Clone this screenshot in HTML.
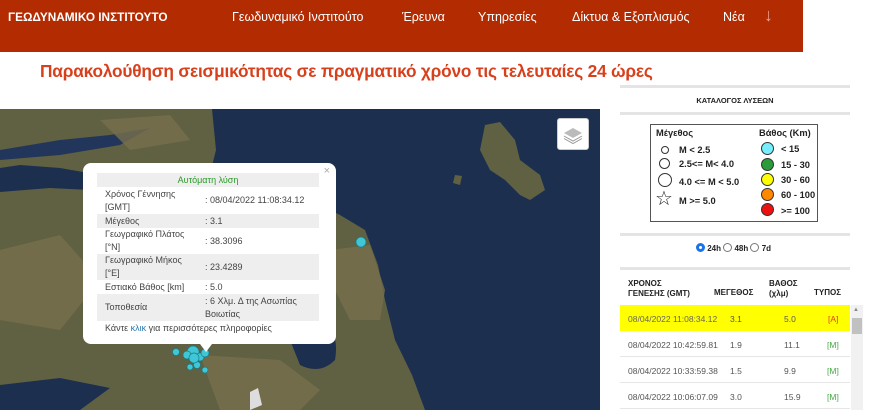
<!DOCTYPE html>
<html><head><meta charset="utf-8"><style>
*{margin:0;padding:0;box-sizing:border-box}
body{width:880px;height:410px;overflow:hidden;background:#fff;font-family:"Liberation Sans",sans-serif;position:relative}
.hdr{position:absolute;left:0;top:0;width:803px;height:52px;background:#b32b00}
.hdr span{position:absolute;top:10px;color:#fff;font-size:12.5px}
.title{position:absolute;left:40px;top:61px;color:#d8401c;font-size:17.3px;font-weight:bold;letter-spacing:-.2px}
.map{position:absolute;left:0;top:109px;width:600px;height:301px;background:#1d2f4e;overflow:hidden}
.pop{position:absolute;left:83px;top:163px;width:253px;height:181px;background:#fff;border-radius:8px;font-size:9px;color:#444}
.pop table{position:absolute;left:14px;top:10px;width:222px;border-collapse:collapse}
.pop td{padding:0 0 0 8px;line-height:13px;vertical-align:middle}
.g{background:#eee}
.rp{position:absolute;left:620px;width:230px;height:3px;background:#e4e4e4}
.leg{position:absolute;left:650px;top:124px;width:168px;height:98px;border:1.5px solid #555;font-size:9.3px;font-weight:bold;color:#222}
.leg div{position:absolute}
.c{border:1px solid #333;border-radius:50%}
.th{position:absolute;font-size:8px;font-weight:bold;color:#222;line-height:10px}
.row{position:absolute;left:620px;width:230px;height:26px;font-size:8.5px;color:#555;border-bottom:1px solid #e6e6e6}
.row span{position:absolute;top:9px}
</style></head><body>
<div class="hdr">
<span style="left:8px;font-weight:bold;font-size:11.8px">ΓΕΩΔΥΝΑΜΙΚΟ ΙΝΣΤΙΤΟΥΤΟ</span>
<span style="left:232px">Γεωδυναμικό Ινστιτούτο</span>
<span style="left:402px">Έρευνα</span>
<span style="left:478px">Υπηρεσίες</span>
<span style="left:572px">Δίκτυα &amp; Εξοπλισμός</span>
<span style="left:723px">Νέα</span>
<span style="left:764px;top:5px;font-size:18px;color:#f0a090">↓</span>
</div>
<div class="title">Παρακολούθηση σεισμικότητας σε πραγματικό χρόνο τις τελευταίες 24 ώρες</div>
<div class="map">
<svg width="600" height="301" viewBox="0 109 600 301">
<g fill="#5f6142">
<path d="M0 109 L212 109 L216 150 L212 166 L180 168 L140 172 L100 175 L60 168 L20 165 L0 168Z"/>
<path d="M0 192 L50 188 L90 190 L140 182 L215 172 L240 165 L280 175 L310 200 L340 215 L365 230 L378 265 L385 300 L395 340 L412 375 L425 410 L0 410Z"/>
<path d="M485 125 L500 122 L515 140 L520 160 L540 175 L545 190 L530 200 L520 195 L505 180 L490 170 L480 150Z"/>
<path d="M455 175 L462 176 L460 185 L453 183Z"/>
</g>
<path d="M0 150 L60 140 L110 135 L150 128 L120 145 L60 155 L0 160Z" fill="#22355a"/>
<g fill="#786f4c" opacity=".8">
<path d="M0 250 L60 235 L100 280 L60 330 L0 320Z"/>
<path d="M200 355 L280 360 L320 390 L300 410 L220 410Z"/>
<path d="M330 250 L370 245 L385 290 L380 320 L350 320 L335 290Z"/>
<path d="M100 120 L170 115 L190 140 L130 150Z"/>
</g>
<path d="M290 340 Q300 320 320 322 Q340 330 335 360 Q320 375 300 365Z" fill="#1d2f4e"/>
<path d="M0 385 L60 378 L110 388 L80 410 L0 410Z" fill="#1d2f4e"/>
<path d="M250 392 L258 388 L262 405 L250 410Z" fill="#ddd"/>
<g fill="#3fc7d6" stroke="#1a7a8a" stroke-width=".7">
<circle cx="361" cy="242" r="5"/>
<circle cx="176" cy="352" r="3.5"/><circle cx="193" cy="352" r="6"/><circle cx="200" cy="357" r="4"/><circle cx="187" cy="355" r="4"/><circle cx="205" cy="353" r="4"/><circle cx="197" cy="365" r="3.5"/><circle cx="205" cy="370" r="3"/><circle cx="190" cy="367" r="3"/><circle cx="194" cy="358" r="5"/>
</g>
<path d="M200 344 L212 344 L206 352Z" fill="#fff"/>
</svg>
<div style="position:absolute;left:557px;top:9px;width:32px;height:32px;background:#fff;border-radius:3px;border:1px solid #ccc">
<svg width="30" height="30" viewBox="0 0 30 30"><path d="M15 9 L24 14 L15 19 L6 14Z" fill="#bbb"/><path d="M6 17 L15 22 L24 17" stroke="#999" fill="none"/><path d="M6 19.5 L15 24.5 L24 19.5" stroke="#999" fill="none"/></svg>
</div>
</div>
<div class="pop">
<span style="position:absolute;right:6px;top:2px;color:#aaa;font-size:11px">×</span>
<table>
<tr class="g"><td colspan="2" style="text-align:center;color:#2a9a2a;height:14px;padding:0">Αυτόματη λύση</td></tr>
<tr style="height:27px"><td style="width:100px;padding-right:8px">Χρόνος Γέννησης [GMT]</td><td>: 08/04/2022 11:08:34.12</td></tr>
<tr class="g" style="height:14px"><td>Μέγεθος</td><td>: 3.1</td></tr>
<tr style="height:26px"><td style="padding-right:8px">Γεωγραφικό Πλάτος [°N]</td><td>: 38.3096</td></tr>
<tr class="g" style="height:25px"><td style="padding-right:8px">Γεωγραφικό Μήκος [°E]</td><td>: 23.4289</td></tr>
<tr style="height:14px"><td>Εστιακό Βάθος [km]</td><td>: 5.0</td></tr>
<tr class="g" style="height:27px"><td>Τοποθεσία</td><td>: 6 Χλμ. Δ της Ασωπίας Βοιωτίας</td></tr>
<tr style="height:14px"><td colspan="2">Κάντε <span style="color:#2a7ab0">κλικ</span> για περισσότερες πληροφορίες</td></tr>
</table>
</div>
<div class="rp" style="top:85px"></div>
<div style="position:absolute;left:620px;width:230px;top:96px;text-align:center;font-size:7.5px;color:#222;font-weight:bold">ΚΑΤΑΛΟΓΟΣ ΛΥΣΕΩΝ</div>
<div class="rp" style="top:112px"></div>
<div class="leg">
<div style="left:5px;top:3px">Μέγεθος</div>
<div style="left:108px;top:3px">Βάθος (Km)</div>
<div class="c" style="left:10px;top:21px;width:8px;height:8px"></div><div style="left:28px;top:20px">M &lt; 2.5</div>
<div class="c" style="left:8px;top:33px;width:11px;height:11px"></div><div style="left:28px;top:34px">2.5&lt;= M&lt; 4.0</div>
<div class="c" style="left:7px;top:48px;width:14px;height:14px"></div><div style="left:28px;top:52px">4.0 &lt;= M &lt; 5.0</div>
<div style="left:4px;top:64px;font-size:20px;font-weight:normal;line-height:20px">☆</div><div style="left:28px;top:71px">M &gt;= 5.0</div>
<div class="c" style="left:110px;top:17px;width:13px;height:13px;background:#7ef"></div><div style="left:130px;top:19px">&lt; 15</div>
<div class="c" style="left:110px;top:33px;width:13px;height:13px;background:#2a9a3a"></div><div style="left:130px;top:35px">15 - 30</div>
<div class="c" style="left:110px;top:48px;width:13px;height:13px;background:#ff0"></div><div style="left:130px;top:50px">30 - 60</div>
<div class="c" style="left:110px;top:63px;width:13px;height:13px;background:#f80"></div><div style="left:130px;top:65px">60 - 100</div>
<div class="c" style="left:110px;top:78px;width:13px;height:13px;background:#e11"></div><div style="left:130px;top:81px">&gt;= 100</div>
</div>
<div class="rp" style="top:233px"></div>
<div style="position:absolute;left:696px;top:243px;font-size:8px;font-weight:bold;color:#222">
<span style="display:inline-block;width:9px;height:9px;border-radius:50%;border:3px solid #1a73e8;vertical-align:-1px"></span> 24h <span style="display:inline-block;width:9px;height:9px;border-radius:50%;border:1px solid #777;vertical-align:-1px"></span> 48h <span style="display:inline-block;width:9px;height:9px;border-radius:50%;border:1px solid #777;vertical-align:-1px"></span> 7d</div>
<div class="rp" style="top:267px"></div>
<div class="th" style="left:628px;top:279px">ΧΡΟΝΟΣ<br>ΓΕΝΕΣΗΣ (GMT)</div>
<div class="th" style="left:714px;top:288px">ΜΕΓΕΘΟΣ</div>
<div class="th" style="left:769px;top:279px">ΒΑΘΟΣ<br>(χλμ)</div>
<div class="th" style="left:814px;top:288px">ΤΥΠΟΣ</div>
<div class="row" style="top:305px;background:#ff0;border:none"><span style="left:8px;color:#666">08/04/2022 11:08:34.12</span><span style="left:110px">3.1</span><span style="left:164px">5.0</span><span style="left:208px;color:#e33">[A]</span></div>
<div class="row" style="top:331px"><span style="left:8px">08/04/2022 10:42:59.81</span><span style="left:110px">1.9</span><span style="left:164px">11.1</span><span style="left:207px;color:#4a4">[M]</span></div>
<div class="row" style="top:357px"><span style="left:8px">08/04/2022 10:33:59.38</span><span style="left:110px">1.5</span><span style="left:164px">9.9</span><span style="left:207px;color:#4a4">[M]</span></div>
<div class="row" style="top:383px"><span style="left:8px">08/04/2022 10:06:07.09</span><span style="left:110px">3.0</span><span style="left:164px">15.9</span><span style="left:207px;color:#4a4">[M]</span></div>
<div style="position:absolute;left:851px;top:305px;width:12px;height:105px;background:#f1f1f1"></div>
<div style="position:absolute;left:852px;top:318px;width:10px;height:16px;background:#c1c1c1"></div>
<div style="position:absolute;left:853px;top:307px;font-size:6px;color:#888">▲</div>
</body></html>
